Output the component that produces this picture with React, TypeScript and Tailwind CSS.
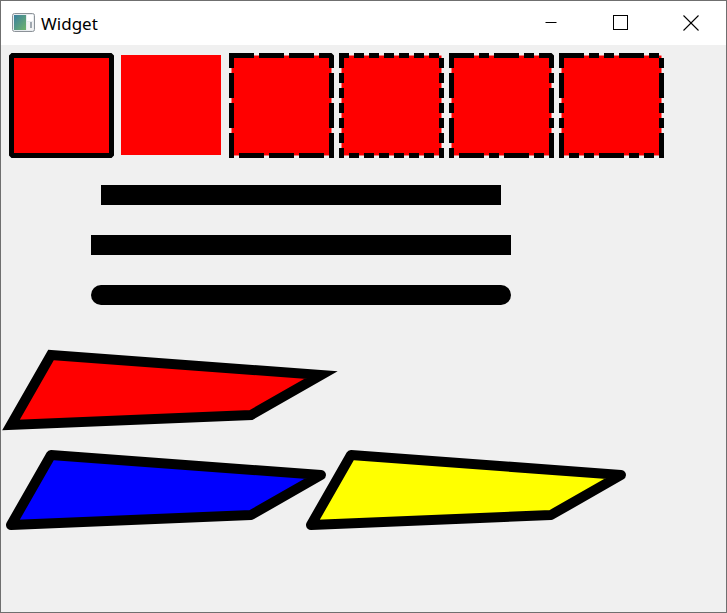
import React from "react";

function AppIcon() {
  return (
    <svg width="23" height="19" viewBox="0 0 23 19">
      <defs>
        <linearGradient id="g1" x1="0" y1="0" x2="1" y2="1">
          <stop offset="0" stopColor="#3a7fa0" />
          <stop offset="1" stopColor="#6fb46a" />
        </linearGradient>
      </defs>
      <rect x="0.5" y="0.5" width="22" height="18" rx="2" fill="#e8ecef" stroke="#8c9298" />
      <rect x="2" y="2" width="12" height="15" fill="url(#g1)" />
      <rect x="15" y="2" width="6" height="6" fill="#ffffff" />
      <rect x="15" y="9" width="6" height="8" fill="#f4f4f4" />
      <rect x="18" y="9" width="2" height="6" fill="#a0a8b0" />
    </svg>
  );
}

export default function App() {
  const sq = [230.5, 340.5, 450.5, 560.5];
  const dashes = ["20 10", "5 10", "20 10 5 10", "20 10 5 10 5 10"];
  return (
    <div
      className="w-[727px] h-[613px] border border-[#6f6f6f] flex flex-col bg-[#f0f0f0]"
      style={{ fontFamily: '"Noto Sans", "Open Sans", sans-serif' }}
    >
      <div className="h-[44px] bg-white flex items-stretch">
        <div className="flex items-center pl-[11px] pb-[1px]">
          <AppIcon />
          <span className="ml-[6px] text-[17px] leading-none text-black mt-[1px]">Widget</span>
        </div>
        <div className="ml-auto flex">
          <div className="w-[70px] flex items-center justify-center">
            <svg width="12" height="12" viewBox="0 0 12 12">
              <line x1="0.5" y1="5.5" x2="11.5" y2="5.5" stroke="#000" strokeWidth="1" />
            </svg>
          </div>
          <div className="w-[70px] flex items-center justify-center">
            <svg width="16" height="16" viewBox="0 0 16 16">
              <rect x="0.5" y="0.5" width="14" height="14" fill="none" stroke="#000" strokeWidth="1" />
            </svg>
          </div>
          <div className="w-[70px] flex items-center justify-center">
            <svg width="16" height="16" viewBox="0 0 16 16">
              <line x1="0.5" y1="0.5" x2="15.5" y2="15.5" stroke="#000" strokeWidth="1.1" />
              <line x1="15.5" y1="0.5" x2="0.5" y2="15.5" stroke="#000" strokeWidth="1.1" />
            </svg>
          </div>
        </div>
      </div>
      <div className="flex-1 bg-[#f0f0f0]">
        <svg width="725" height="567" viewBox="0 0 725 567" className="block">
          <rect x="10.5" y="10.5" width="100" height="100" fill="#ff0000" stroke="#000" strokeWidth="5" strokeLinejoin="bevel" />
          <rect x="120" y="10" width="100" height="100" fill="#ff0000" />
          {sq.map((x, i) => (
            <rect
              key={x}
              x={x}
              y="10.5"
              width="100"
              height="100"
              fill="#ff0000"
              stroke="#000"
              strokeWidth="5"
              strokeLinecap="square"
              strokeLinejoin="bevel"
              strokeDasharray={dashes[i]}
            />
          ))}
          <line x1="100" y1="150" x2="500" y2="150" stroke="#000" strokeWidth="20" strokeLinecap="butt" />
          <line x1="100" y1="200" x2="500" y2="200" stroke="#000" strokeWidth="20" strokeLinecap="square" />
          <line x1="100" y1="250" x2="500" y2="250" stroke="#000" strokeWidth="20" strokeLinecap="round" />
          <polygon
            points="50,310 320,330 250,370 10,380"
            fill="#ff0000"
            stroke="#000"
            strokeWidth="10"
            strokeLinejoin="miter"
            strokeMiterlimit="10"
          />
          <polygon
            points="50,410 320,430 250,470 10,480"
            fill="#0000ff"
            stroke="#000"
            strokeWidth="10"
            strokeLinejoin="round"
          />
          <polygon
            points="350,410 620,430 550,470 310,480"
            fill="#ffff00"
            stroke="#000"
            strokeWidth="10"
            strokeLinejoin="round"
          />
        </svg>
      </div>
    </div>
  );
}
